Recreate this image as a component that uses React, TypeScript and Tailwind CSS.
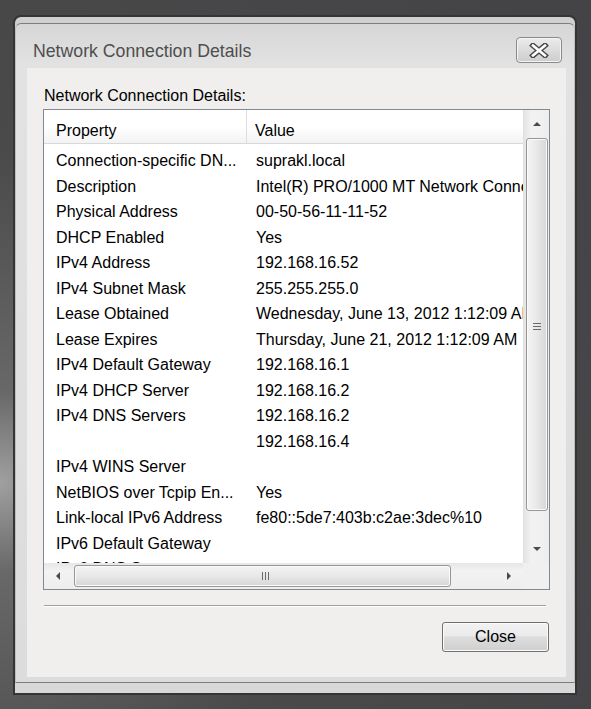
import React from 'react';

const rows: [string, string][] = [
  ['Connection-specific DN...', 'suprakl.local'],
  ['Description', 'Intel(R) PRO/1000 MT Network Connection'],
  ['Physical Address', '00-50-56-11-11-52'],
  ['DHCP Enabled', 'Yes'],
  ['IPv4 Address', '192.168.16.52'],
  ['IPv4 Subnet Mask', '255.255.255.0'],
  ['Lease Obtained', 'Wednesday, June 13, 2012 1:12:09 AM'],
  ['Lease Expires', 'Thursday, June 21, 2012 1:12:09 AM'],
  ['IPv4 Default Gateway', '192.168.16.1'],
  ['IPv4 DHCP Server', '192.168.16.2'],
  ['IPv4 DNS Servers', '192.168.16.2'],
  ['', '192.168.16.4'],
  ['IPv4 WINS Server', ''],
  ['NetBIOS over Tcpip En...', 'Yes'],
  ['Link-local IPv6 Address', 'fe80::5de7:403b:c2ae:3dec%10'],
  ['IPv6 Default Gateway', ''],
  ['IPv6 DNS Servers', ''],
];

const Arrow = ({ dir }: { dir: 'up' | 'down' | 'left' | 'right' }) => {
  const pts = {
    up: '0,5 4,1 8,5',
    down: '0,1 8,1 4,5',
    left: '5,0 5,8 1,4',
    right: '1,0 1,8 5,4',
  }[dir];
  const vertical = dir === 'up' || dir === 'down';
  return (
    <svg width={vertical ? 8 : 6} height={vertical ? 6 : 8} viewBox={vertical ? '0 0 8 6' : '0 0 6 8'}>
      <polygon points={pts} fill="#4a4a4a" />
    </svg>
  );
};

const App = () => {
  return (
    <div
      className="w-[591px] h-[709px] overflow-hidden pt-[15px] pl-[13px] bg-[radial-gradient(circle_at_0%_68%,#a0a0a0_0px,#686868_90px,#4a4a4b_330px,#444446_700px)]"
      style={{ fontFamily: '"Liberation Sans", Arial, sans-serif' }}
    >
      {/* window */}
      <div className="w-[564px] h-[680px] border-2 border-[#353535] rounded-t-[8px] bg-[linear-gradient(to_bottom,#d0d0d0,#d8d8d8)] pt-[6px] pb-[10px] flex flex-col">
        <div className="flex-1 flex flex-col border-t border-b border-[#7d7d7d] border-x border-x-[#bdbdbd] rounded-t-[6px] bg-[linear-gradient(to_bottom,#d6d6d6,#e2e2e2_40px,#dcdcdc)]">
          {/* title bar */}
          <div className="h-[44px] pt-[8px] pl-[17px] pr-[12px] flex items-center justify-between">
            <span className="text-[17.7px] text-[#4e4e4e] leading-none mt-[4px]">Network Connection Details</span>
            <div className="w-[46px] h-[26px] rounded-[4px] border border-[#8a8a8a] bg-[linear-gradient(to_bottom,#ececec,#dcdcdc_50%,#cdcdcd)] shadow-[inset_0_0_0_1px_#f4f4f4] flex items-center justify-center">
              <svg width="22" height="15" viewBox="0 0 22 15">
                <path d="M5 2.5 L17 12.5 M17 2.5 L5 12.5" stroke="#474747" strokeWidth="5.5" strokeLinecap="square" />
                <path d="M5 2.5 L17 12.5 M17 2.5 L5 12.5" stroke="#ffffff" strokeWidth="2.6" strokeLinecap="square" />
              </svg>
            </div>
          </div>

          {/* client area */}
          <div className="ml-[11px] w-[539px] h-[609px] bg-[#f0efed] flex flex-col">
            <div className="mt-[18px] pl-[17px] h-[19px] text-[16px] leading-[19px] text-black">
              Network Connection Details:
            </div>

            {/* list view */}
            <div className="mt-[4px] ml-[16px] w-[507px] h-[481px] border border-[#828790] bg-white flex flex-col">
              <div className="flex h-[453px]">
                <div className="w-[479px] h-full overflow-hidden flex flex-col">
                  <div className="h-[34px] shrink-0 flex bg-[linear-gradient(to_bottom,#ffffff,#ffffff_50%,#f3f3f3)] border-b border-[#d9d9d9] text-[16px] text-black">
                    <div className="w-[202px] pl-[12px] pt-[9px] flex items-center">Property</div>
                    <div className="w-px h-full bg-[#dddddd]" />
                    <div className="pl-[8px] pt-[9px] flex items-center">Value</div>
                  </div>
                  <div className="pt-[4.5px] text-[16px] text-black">
                    {rows.map(([k, v], i) => (
                      <div key={i} className="h-[25.5px] flex items-center whitespace-nowrap">
                        <div className="w-[203px] shrink-0 pl-[12px] overflow-hidden">{k}</div>
                        <div className="pl-[9px]">{v}</div>
                      </div>
                    ))}
                  </div>
                </div>

                {/* vertical scrollbar */}
                <div className="w-[26px] h-full bg-[linear-gradient(to_right,#e4e4e4,#f2f2f2_30%,#eeeeee)] border-l border-[#e0e0e0] flex flex-col items-center">
                  <div className="h-[28px] flex items-center justify-center">
                    <Arrow dir="up" />
                  </div>
                  <div className="w-[22px] h-[373px] rounded-[3px] border border-[#979797] bg-[linear-gradient(to_right,#f4f4f4,#e8e8e8_50%,#d6d6d6)] shadow-[inset_0_0_0_1px_#fafafa] flex items-center justify-center">
                    <div className="flex flex-col gap-[2px] mt-[4px]">
                      <div className="w-[8px] h-px bg-[#6a6a6a]" />
                      <div className="w-[8px] h-px bg-[#6a6a6a]" />
                      <div className="w-[8px] h-px bg-[#6a6a6a]" />
                    </div>
                  </div>
                  <div className="flex-1" />
                  <div className="h-[28px] flex items-center justify-center">
                    <Arrow dir="down" />
                  </div>
                </div>
              </div>

              {/* horizontal scrollbar */}
              <div className="flex h-[26px]">
                <div className="w-[479px] h-full bg-[linear-gradient(to_bottom,#e6e6e6,#f2f2f2_30%,#eeeeee)] flex items-center">
                  <div className="w-[28px] flex items-center justify-center">
                    <Arrow dir="left" />
                  </div>
                  <div className="ml-[2px] w-[377px] h-[22px] rounded-[3px] border border-[#979797] bg-[linear-gradient(to_bottom,#f4f4f4,#e8e8e8_50%,#d6d6d6)] shadow-[inset_0_0_0_1px_#fafafa] flex items-center justify-center">
                    <div className="flex gap-[2px] ml-[6px]">
                      <div className="w-px h-[8px] bg-[#6a6a6a]" />
                      <div className="w-px h-[8px] bg-[#6a6a6a]" />
                      <div className="w-px h-[8px] bg-[#6a6a6a]" />
                    </div>
                  </div>
                  <div className="flex-1" />
                  <div className="w-[28px] flex items-center justify-center">
                    <Arrow dir="right" />
                  </div>
                </div>
                <div className="w-[26px] h-full bg-[#f0f0f0]" />
              </div>
            </div>

            {/* separator */}
            <div className="mt-[15px] ml-[17px] w-[502px] h-px bg-[#a0a0a0]" />
            <div className="ml-[17px] w-[502px] h-px bg-white" />

            <div className="mt-[15px] ml-[415px] w-[107px] h-[30px] rounded-[3px] border border-[#707070] bg-[linear-gradient(to_bottom,#f2f2f2,#ebebeb_45%,#dddddd_50%,#cfcfcf)] shadow-[inset_0_0_0_1px_#fbfbfb] flex items-center justify-center text-[16px] text-black">
              Close
            </div>
          </div>
        </div>
      </div>
    </div>
  );
};

export default App;
